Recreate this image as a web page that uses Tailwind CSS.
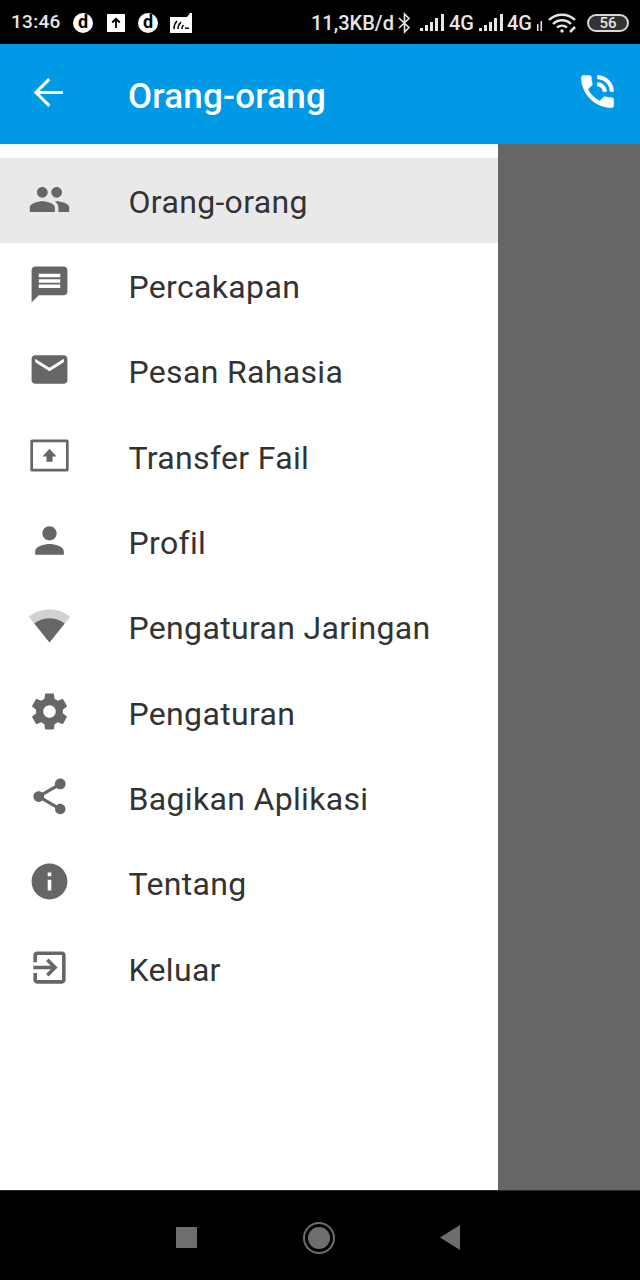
<!DOCTYPE html>
<html lang="en">
<head>
  <meta charset="UTF-8" />
  <meta name="viewport" content="width=device-width, initial-scale=1.0"/>
  <title>Orang-orang</title>
  <script src="https://cdn.jsdelivr.net/npm/@tailwindcss/browser@4"></script>
</head>
<body class="bg-black font-['Roboto',sans-serif]">
  <div class="w-[640px] h-[1280px] flex flex-col overflow-hidden">

    <!-- Status bar -->
    <div class="h-[44px] bg-black flex items-center text-[#e6e6e6] font-medium shrink-0 pl-[11px] pt-[1px]">
      <span class="w-[62px] text-[19px] tracking-[0.3px]">13:46</span>
      <span class="w-[20px] h-[20px] rounded-full bg-white text-black text-[18px] leading-[18px] font-bold text-center">d</span>
      <div class="ml-[14px] w-[18px] h-[18px] bg-white flex items-center justify-center">
        <svg class="w-[12px] h-[12px]" viewBox="0 0 12 12" fill="none" stroke="#000" stroke-width="1.8"><path d="M6 11V2M2.2 5.5 6 1.8l3.8 3.7"/></svg>
      </div>
      <span class="ml-[13px] w-[20px] h-[20px] rounded-full bg-white text-black text-[18px] leading-[18px] font-bold text-center">d</span>
      <svg class="ml-[12px] w-[22px] h-[21px] mb-[1px]" viewBox="0 0 22 21"><path d="M0 5h17l3-4h2v20H0z" fill="#fff"/><path d="M4 17c0-3 1-6 3-8M8 17c0-3 1-5 3-7M12 17c0-2 .5-3 1.500-4" stroke="#000" stroke-width="1.500" fill="none"/><path d="M15 17h4v-1.500h-4z" fill="#000"/></svg>
      <span class="ml-[119px] w-[87px] text-[20px] whitespace-nowrap">11,3KB/d</span>
      <svg class="w-[13px] h-[22px]" viewBox="0 0 13 22" fill="none" stroke="#e6e6e6" stroke-width="1.600"><path d="M1 6l10 9.500L6.500 20V2L11 6.500 1 16"/></svg>
      <svg class="ml-[9px] w-[25px] h-[18px]" viewBox="0 0 25 18" fill="#e6e6e6"><path d="M0 14h3v3H0zM5 11h3v6H5zM10 8h3v9h-3zM15 4h3v13h-3zM21 0h3v17h-3z"/></svg>
      <span class="ml-[4px] w-[27px] text-[20px]">4G</span>
      <svg class="ml-[3px] w-[25px] h-[18px]" viewBox="0 0 25 18" fill="#e6e6e6"><path d="M0 14h3v3H0zM5 11h3v6H5zM10 8h3v9h-3zM15 4h3v13h-3zM21 0h3v17h-3z"/></svg>
      <span class="ml-[3px] w-[27px] text-[20px]">4G</span>
      <svg class="ml-[2px] w-[7px] h-[10px] mt-[6px]" viewBox="0 0 7 10" fill="#e6e6e6"><path d="M1 3h1.500v7H1zM4.500 0H6v10H4.500z"/></svg>
      <svg class="ml-[5px] w-[30px] h-[20px]" viewBox="0 0 30 20" fill="none" stroke="#e6e6e6" stroke-width="2.400"><path d="M1 7c7-7 19-7 26 0M5 11c5-5 13-5 18 0M9 14.500c3-2.500 7-2.500 10 0"/><circle cx="14" cy="18" r="1.700" fill="#e6e6e6" stroke="none"/><path d="M22 19l5-5" stroke-width="2.500"/></svg>
      <div class="ml-[9px] w-[42px] h-[18px] rounded-full border-2 border-[#d8d8d8] overflow-hidden flex bg-[#333] items-center justify-center">
        <span class="text-[15px] leading-[14px] text-[#e6e6e6] font-medium">56</span>
      </div>
    </div>

    <!-- App bar -->
    <div class="h-[100px] bg-[#0099e5] flex items-center shrink-0 text-white">
      <svg class="ml-[27px] w-[43px] h-[43px] mb-[3px]" viewBox="0 0 24 24" fill="none" stroke="#fff" stroke-width="1.700"><path d="M20 12H5.500M12.500 4.500 5 12l7.500 7.500"/></svg>
      <span class="ml-[58px] mt-[4px] text-[35px] tracking-[0.2px] font-medium leading-none">Orang-orang</span>
      <svg class="ml-auto mr-[21px] w-[43px] h-[43px] mb-[6px]" viewBox="0 0 24 24" fill="#fff" stroke="#fff" stroke-width="0.3"><path d="M20 15.500c-1.250 0-2.450-.2-3.570-.57-.35-.11-.74-.03-1.020.24l-2.200 2.200c-2.830-1.440-5.150-3.750-6.590-6.590l2.200-2.210c.28-.26.36-.65.25-1C8.700 6.450 8.500 5.250 8.500 4c0-.55-.45-1-1-1H4c-.55 0-1 .45-1 1 0 9.390 7.610 17 17 17 .55 0 1-.45 1-1v-3.500c0-.55-.45-1-1-1zM19 12h2c0-4.970-4.030-9-9-9v2c3.870 0 7 3.130 7 7zm-4 0h2c0-2.760-2.240-5-5-5v2c1.660 0 3 1.340 3 3z"/></svg>
    </div>

    <!-- Drawer + scrim -->
    <div class="flex-1 flex bg-[#666666]">
      <nav class="w-[498px] bg-white pt-[14px] border-t-2 border-[#f4f4f4] text-[#333333] text-[32px] tracking-[0.33px]">
        <div class="h-[85.33px] -mt-[2px] bg-[#e9e9e9] flex items-center">
          <svg class="ml-[28px] w-[43px] h-[43px] mb-[3px] shrink-0" viewBox="0 0 24 24" fill="#666"><path d="M16 11c1.660 0 2.990-1.340 2.990-3S17.660 5 16 5c-1.660 0-3 1.340-3 3s1.340 3 3 3zm-8 0c1.660 0 2.990-1.340 2.990-3S9.660 5 8 5C6.340 5 5 6.340 5 8s1.340 3 3 3zm0 2c-2.330 0-7 1.170-7 3.500V19h14v-2.500c0-2.330-4.670-3.500-7-3.500zm8 0c-.29 0-.62.020-.97.050 1.160.84 1.970 1.970 1.970 3.450V19h6v-2.500c0-2.330-4.670-3.500-7-3.500z"/></svg>
          <span class="ml-[57.5px] mt-[2px]">Orang-orang</span>
        </div>
        <div class="h-[85.33px] flex items-center">
          <svg class="ml-[28px] w-[43px] h-[43px] mb-[3px] shrink-0" viewBox="0 0 24 24" fill="#666"><path d="M20 2H4c-1.100 0-1.990.9-1.990 2L2 22l4-4h14c1.100 0 2-.9 2-2V4c0-1.100-.9-2-2-2zm-2 12H6v-2h12v2zm0-3H6V9h12v2zm0-3H6V6h12v2z"/></svg>
          <span class="ml-[57.5px] mt-[2px]">Percakapan</span>
        </div>
        <div class="h-[85.33px] flex items-center">
          <svg class="ml-[28px] w-[43px] h-[43px] mb-[3px] shrink-0" viewBox="0 0 24 24" fill="#666"><path d="M20 4H4c-1.100 0-1.990.9-1.990 2L2 18c0 1.100.9 2 2 2h16c1.100 0 2-.9 2-2V6c0-1.100-.9-2-2-2zm0 4l-8 5-8-5V6l8 5 8-5v2z"/></svg>
          <span class="ml-[57.5px] mt-[2px]">Pesan Rahasia</span>
        </div>
        <div class="h-[85.33px] flex items-center">
          <svg class="ml-[28px] w-[43px] h-[43px] mb-[3px] shrink-0" viewBox="0 0 24 24" fill="#666"><path fill-rule="evenodd" d="M2.300 3.100h19.400c.6 0 1 .4 1 1v15.800c0 .6-.4 1-1 1H2.300c-.6 0-1-.4-1-1V4.100c0-.6.4-1 1-1zm.5 1.500v14.800h18.400V4.600z"/><path d="M12 8.300l-3.900 4.200h2.200v3h3.400v-3h2.200z"/></svg>
          <span class="ml-[57.5px] mt-[2px]">Transfer Fail</span>
        </div>
        <div class="h-[85.33px] flex items-center">
          <svg class="ml-[28px] w-[43px] h-[43px] mb-[3px] shrink-0" viewBox="0 0 24 24" fill="#666"><path d="M12 12c2.210 0 4-1.790 4-4s-1.790-4-4-4-4 1.790-4 4 1.790 4 4 4zm0 2c-2.670 0-8 1.340-8 4v2h16v-2c0-2.660-5.330-4-8-4z"/></svg>
          <span class="ml-[57.5px] mt-[2px]">Profil</span>
        </div>
        <div class="h-[85.33px] flex items-center">
          <svg class="ml-[28px] w-[43px] h-[43px] mb-[3px] shrink-0" viewBox="0 0 24 24" fill="#666"><path fill-opacity=".3" d="M12.010 21.490L23.640 7c-.45-.34-4.930-4-11.640-4C5.280 3 .81 6.660.36 7l11.630 14.490.01.01.01-.01z"/><path d="M3.530 10.950l8.460 10.540.01.01.01-.01 8.460-10.540C20.040 10.620 16.810 8 12 8c-4.810 0-8.040 2.620-8.470 2.950z"/></svg>
          <span class="ml-[57.5px] mt-[2px]">Pengaturan Jaringan</span>
        </div>
        <div class="h-[85.33px] flex items-center">
          <svg class="ml-[28px] w-[43px] h-[43px] mb-[3px] shrink-0" viewBox="0 0 24 24" fill="#666"><path d="M19.430 12.980c.04-.32.07-.64.07-.98s-.03-.66-.07-.98l2.110-1.650c.19-.15.24-.42.12-.64l-2-3.460c-.12-.22-.39-.3-.61-.22l-2.490 1c-.52-.4-1.080-.73-1.690-.98l-.38-2.650C14.460 2.180 14.250 2 14 2h-4c-.25 0-.46.18-.49.42l-.38 2.650c-.61.25-1.170.59-1.690.98l-2.490-1c-.23-.09-.49 0-.61.22l-2 3.460c-.13.22-.07.49.12.64l2.110 1.650c-.04.32-.07.65-.07.98s.03.66.07.98l-2.110 1.650c-.19.15-.24.42-.12.64l2 3.460c.12.22.39.3.61.22l2.490-1c.52.4 1.080.73 1.690.98l.38 2.650c.03.24.24.42.49.42h4c.25 0 .46-.18.49-.42l.38-2.650c.61-.25 1.170-.59 1.690-.98l2.490 1c.23.09.49 0 .61-.22l2-3.460c.12-.22.07-.49-.12-.64l-2.110-1.650zM12 15.500c-1.930 0-3.500-1.570-3.500-3.500s1.570-3.500 3.500-3.500 3.500 1.570 3.500 3.500-1.570 3.500-3.500 3.500z"/></svg>
          <span class="ml-[57.5px] mt-[2px]">Pengaturan</span>
        </div>
        <div class="h-[85.33px] flex items-center">
          <svg class="ml-[28px] w-[43px] h-[43px] mb-[3px] shrink-0" viewBox="0 0 24 24" fill="#666"><path d="M18 16.080c-.76 0-1.440.3-1.960.77L8.910 12.700c.05-.23.09-.46.09-.7s-.04-.47-.09-.7l7.050-4.110c.54.5 1.250.81 2.040.81 1.660 0 3-1.340 3-3s-1.340-3-3-3-3 1.340-3 3c0 .24.04.47.09.7L8.040 9.810C7.500 9.310 6.790 9 6 9c-1.660 0-3 1.340-3 3s1.340 3 3 3c.79 0 1.500-.31 2.040-.81l7.120 4.160c-.05.21-.08.43-.08.65 0 1.610 1.310 2.920 2.920 2.920 1.610 0 2.920-1.310 2.920-2.920s-1.310-2.920-2.920-2.920z"/></svg>
          <span class="ml-[57.5px] mt-[2px]">Bagikan Aplikasi</span>
        </div>
        <div class="h-[85.33px] flex items-center">
          <svg class="ml-[28px] w-[43px] h-[43px] mb-[3px] shrink-0" viewBox="0 0 24 24" fill="#666"><path d="M12 2C6.480 2 2 6.480 2 12s4.480 10 10 10 10-4.480 10-10S17.520 2 12 2zm1 15h-2v-6h2v6zm0-8h-2V7h2v2z"/></svg>
          <span class="ml-[57.5px] mt-[2px]">Tentang</span>
        </div>
        <div class="h-[85.33px] flex items-center">
          <svg class="ml-[28px] w-[43px] h-[43px] mb-[3px] shrink-0" viewBox="0 0 24 24" fill="#666"><path d="M10.090 15.590L11.500 17l5-5-5-5-1.410 1.410L12.670 11H3v2h9.670l-2.580 2.590zM19 3H5c-1.110 0-2 .9-2 2v4h2V5h14v14H5v-4H3v4c0 1.100.89 2 2 2h14c1.100 0 2-.9 2-2V5c0-1.100-.9-2-2-2z"/></svg>
          <span class="ml-[57.5px] mt-[2px]">Keluar</span>
        </div>
      </nav>
    </div>

    <!-- Android nav bar -->
    <div class="h-[90px] bg-black border-t border-[#2a2a2a] shrink-0 flex items-center pl-[176px] pt-[4px]">
      <div class="w-[21px] h-[21px] bg-[#6e6e6e]"></div>
      <div class="ml-[106px] w-[32px] h-[32px] rounded-full border-2 border-[#6e6e6e] flex items-center justify-center">
        <div class="w-[22px] h-[22px] rounded-full bg-[#6e6e6e]"></div>
      </div>
      <svg class="ml-[105px] w-[20px] h-[25px]" viewBox="0 0 20 25" fill="#6e6e6e"><path d="M0 12.500 20 0v25z"/></svg>
    </div>
  </div>
</body>
</html>
